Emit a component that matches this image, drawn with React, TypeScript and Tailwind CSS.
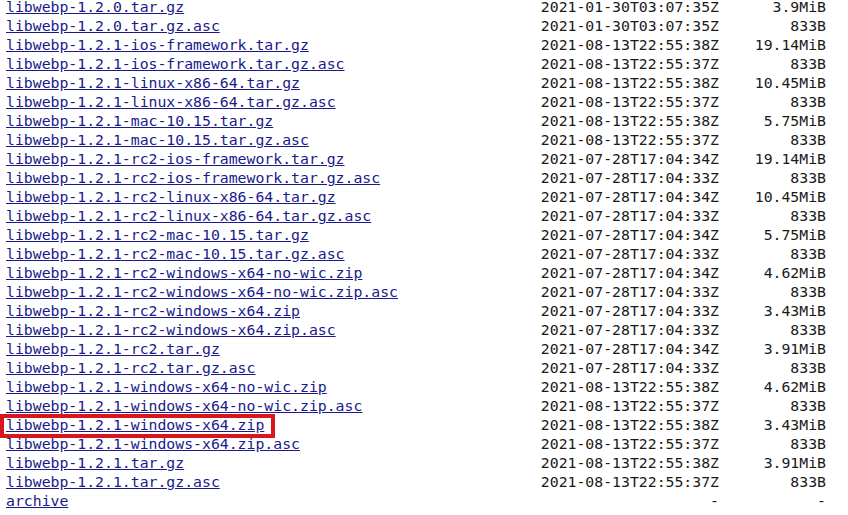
import React from "react";

const rows: [string, string, string][] = [
  ["libwebp-1.2.0.tar.gz", "2021-01-30T03:07:35Z", "3.9MiB"],
  ["libwebp-1.2.0.tar.gz.asc", "2021-01-30T03:07:35Z", "833B"],
  ["libwebp-1.2.1-ios-framework.tar.gz", "2021-08-13T22:55:38Z", "19.14MiB"],
  ["libwebp-1.2.1-ios-framework.tar.gz.asc", "2021-08-13T22:55:37Z", "833B"],
  ["libwebp-1.2.1-linux-x86-64.tar.gz", "2021-08-13T22:55:38Z", "10.45MiB"],
  ["libwebp-1.2.1-linux-x86-64.tar.gz.asc", "2021-08-13T22:55:37Z", "833B"],
  ["libwebp-1.2.1-mac-10.15.tar.gz", "2021-08-13T22:55:38Z", "5.75MiB"],
  ["libwebp-1.2.1-mac-10.15.tar.gz.asc", "2021-08-13T22:55:37Z", "833B"],
  ["libwebp-1.2.1-rc2-ios-framework.tar.gz", "2021-07-28T17:04:34Z", "19.14MiB"],
  ["libwebp-1.2.1-rc2-ios-framework.tar.gz.asc", "2021-07-28T17:04:33Z", "833B"],
  ["libwebp-1.2.1-rc2-linux-x86-64.tar.gz", "2021-07-28T17:04:34Z", "10.45MiB"],
  ["libwebp-1.2.1-rc2-linux-x86-64.tar.gz.asc", "2021-07-28T17:04:33Z", "833B"],
  ["libwebp-1.2.1-rc2-mac-10.15.tar.gz", "2021-07-28T17:04:34Z", "5.75MiB"],
  ["libwebp-1.2.1-rc2-mac-10.15.tar.gz.asc", "2021-07-28T17:04:33Z", "833B"],
  ["libwebp-1.2.1-rc2-windows-x64-no-wic.zip", "2021-07-28T17:04:34Z", "4.62MiB"],
  ["libwebp-1.2.1-rc2-windows-x64-no-wic.zip.asc", "2021-07-28T17:04:33Z", "833B"],
  ["libwebp-1.2.1-rc2-windows-x64.zip", "2021-07-28T17:04:33Z", "3.43MiB"],
  ["libwebp-1.2.1-rc2-windows-x64.zip.asc", "2021-07-28T17:04:33Z", "833B"],
  ["libwebp-1.2.1-rc2.tar.gz", "2021-07-28T17:04:34Z", "3.91MiB"],
  ["libwebp-1.2.1-rc2.tar.gz.asc", "2021-07-28T17:04:33Z", "833B"],
  ["libwebp-1.2.1-windows-x64-no-wic.zip", "2021-08-13T22:55:38Z", "4.62MiB"],
  ["libwebp-1.2.1-windows-x64-no-wic.zip.asc", "2021-08-13T22:55:37Z", "833B"],
  ["libwebp-1.2.1-windows-x64.zip", "2021-08-13T22:55:38Z", "3.43MiB"],
  ["libwebp-1.2.1-windows-x64.zip.asc", "2021-08-13T22:55:37Z", "833B"],
  ["libwebp-1.2.1.tar.gz", "2021-08-13T22:55:38Z", "3.91MiB"],
  ["libwebp-1.2.1.tar.gz.asc", "2021-08-13T22:55:37Z", "833B"],
  ["archive", "-", "-"],
];

export default function App() {
  return (
    <div
      className="relative w-[848px] h-[515px] overflow-hidden bg-white text-[14.8px] leading-[19px] text-[#1a1a1a]"
      style={{ fontFamily: '"DejaVu Sans Mono", "Liberation Mono", monospace' }}
    >
      <div className="flex flex-col -mt-[3px]">
        {rows.map(([name, date, size], i) => (
          <div key={i} className="flex h-[19px] whitespace-nowrap">
            <div className="w-[535px] pl-[6px]">
              <a href="#" className="text-[#1a1a8c] underline">
                {name}
              </a>
            </div>
            <div className="w-[184px] text-right">{date}</div>
            <div className="w-[107px] text-right">{size}</div>
          </div>
        ))}
      </div>
      <div className="absolute left-0 top-[414px] w-[275px] h-[24px] border-[4px] border-[#d9161e]" />
    </div>
  );
}
